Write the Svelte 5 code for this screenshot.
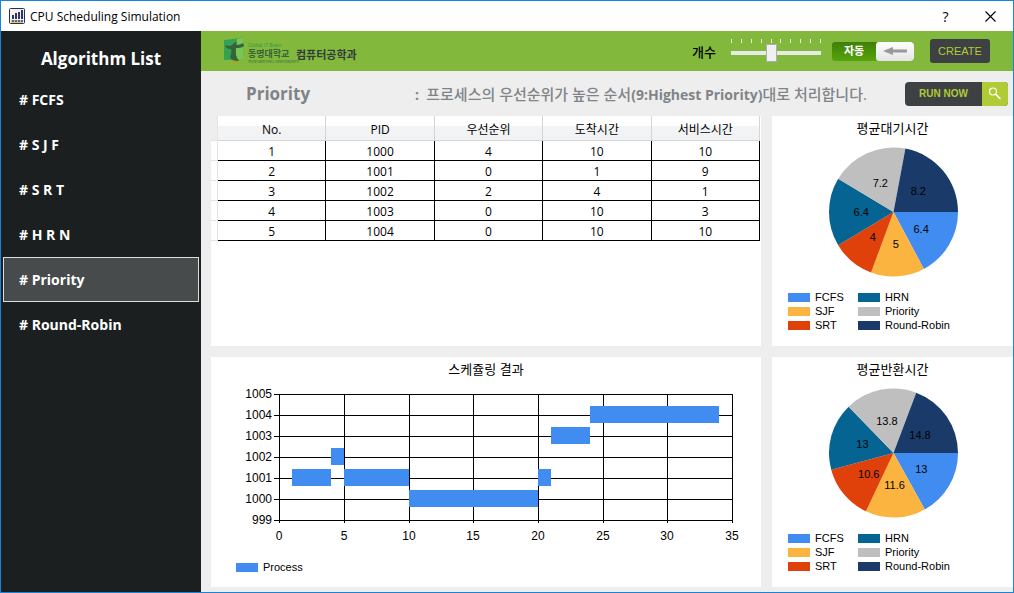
<script>
  const algorithms = ['FCFS', 'S J F', 'S R T', 'H R N', 'Priority', 'Round-Robin'];
  let selected = $state('Priority');
  let count = $state(5);
  let automatic = $state(true);

  const columns = ['No.', 'PID', '우선순위', '도착시간', '서비스시간'];
  const rows = [
    [1, 1000, 4, 10, 10],
    [2, 1001, 0, 1, 9],
    [3, 1002, 2, 4, 1],
    [4, 1003, 0, 10, 3],
    [5, 1004, 0, 10, 10]
  ];

  const names = ['FCFS', 'SJF', 'SRT', 'HRN', 'Priority', 'Round-Robin'];
  const colors = ['#418cf0', '#fcb441', '#e0400a', '#056492', '#bfbfbf', '#1a3b69'];
  const pies = [
    { title: '평균대기시간', values: [6.4, 5, 4, 6.4, 7.2, 8.2] },
    { title: '평균반환시간', values: [13, 11.6, 10.6, 13, 13.8, 14.8] }
  ];

  const R = 64.5;
  function slices(values) {
    const total = values.reduce((a, b) => a + b, 0);
    let angle = 0;
    return values.map((value, i) => {
      const start = angle;
      const end = (angle += (value / total) * Math.PI * 2);
      const mid = (start + end) / 2;
      const at = (a, r) => `${(r * Math.cos(a)).toFixed(2)} ${(r * Math.sin(a)).toFixed(2)}`;
      return {
        value,
        color: colors[i],
        d: `M0 0L${at(start, R)}A${R} ${R} 0 0 1 ${at(end, R)}Z`,
        x: (Math.cos(mid) * R) / 2,
        y: (Math.sin(mid) * R) / 2
      };
    });
  }

  const runs = [
    [1001, 1, 4],
    [1002, 4, 5],
    [1001, 5, 10],
    [1000, 10, 20],
    [1001, 20, 21],
    [1003, 21, 24],
    [1004, 24, 34]
  ];
  const px = (t) => Math.round(68.1 + (t * 453) / 35);
  const py = (pid) => 11 + (1005 - pid) * 21;
  const times = [0, 5, 10, 15, 20, 25, 30, 35];
  const pids = [1005, 1004, 1003, 1002, 1001, 1000, 999];
</script>

<div class="window">
  <header class="titlebar">
    <svg class="app-icon" viewBox="0 0 16 16" aria-hidden="true">
      <rect x=".5" y=".5" width="15" height="15" rx="1" fill="#f4f1e6" stroke="#2c2a66" />
      <path d="M3 7h2v4H3zM6 5h2v6H6zM9 4h2v7H9zM12 2h2v9h-2z" fill="#35306e" />
      <path d="M2 12h12v3H2z" fill="#f7c62f" />
      <path d="M3 12h2v2H3zM6 12h2v2H6zM9 12h2v2H9zM12 12h2v2h-2z" fill="#2d72b8" />
    </svg>
    <span class="caption">CPU Scheduling Simulation</span>
    <button class="win-btn" aria-label="Help">?</button>
    <button class="win-btn" aria-label="Close">
      <svg width="11" height="11" viewBox="0 0 11 11"><path d="M.5.5l10 10M10.5.5l-10 10" stroke="#000" stroke-width="1.1" /></svg>
    </button>
  </header>

  <div class="body">
    <nav class="sidebar">
      <h1>Algorithm List</h1>
      {#each algorithms as name}
        <button class:active={selected === name} onclick={() => (selected = name)}># {name}</button>
      {/each}
    </nav>

    <main>
      <div class="toolbar">
        <div class="logo">
          <svg width="22" height="26" viewBox="0 0 22 26" aria-hidden="true">
            <path d="M1 2L20 0l1 21-20 1z" fill="#35a152" />
            <path d="M14 1l6-1 1 21-9 1z" fill="#7cc455" />
            <path d="M2 7c4 2 7 1 9-2l3-1-1 3c3 0 5-1 7-2l1 3c-3 2-5 2-8 2-1 5 0 9 3 13-4 1-8-1-9-4 1-3 2-5 1-8-3 0-5-1-6-4z" fill="#34623b" />
            <path d="M7 22c4 1 7 0 10 2-3 2-7 2-10-2z" fill="#a4a92d" />
          </svg>
          <span class="university">
            <small class="slogan">Global IT Brain</small>
            <b>동명대학교</b>
            <small>TONGMYONG UNIVERSITY</small>
          </span>
          <strong>컴퓨터공학과</strong>
        </div>
        <label for="count">개수</label>
        <div class="slider">
          <div class="ticks">{#each Array(10) as _}<i></i>{/each}</div>
          <input id="count" type="range" min="1" max="10" bind:value={count} />
        </div>
        <button class="toggle" aria-pressed={automatic} onclick={() => (automatic = !automatic)}>
          <span class="on">자동</span>
          <span class="knob">
            <svg width="24" height="10" viewBox="0 0 24 10"><path d="M0 5l10-4v2.500h14v3H10V9z" fill="#999" /></svg>
          </span>
        </button>
        <button class="create">CREATE</button>
      </div>

      <div class="heading">
        <h2>{selected}</h2>
        <p>:&nbsp; <span>프로세스의 우선순위가 높은 순서</span>(9:Highest Priority)<span>대로 처리합니다.</span></p>
        <button class="run">
          <span class="run-text">RUN NOW</span>
          <span class="run-icon">
            <svg width="14" height="14" viewBox="0 0 14 14" fill="none" stroke="#fff"><circle cx="5" cy="4.500" r="3.500" stroke-width="1.2" /><path d="M7.500 7l5 5" stroke-width="1.500" /></svg>
          </span>
        </button>
      </div>

      <div class="panels">
        <section class="panel">
          <table>
            <thead>
              <tr><td class="stub"></td>{#each columns as c}<th scope="col">{c}</th>{/each}</tr>
            </thead>
            <tbody>
              {#each rows as row}
                <tr><td class="stub"></td>{#each row as cell}<td>{cell}</td>{/each}</tr>
              {/each}
            </tbody>
          </table>
        </section>

        {@render pie(pies[0])}

        <section class="panel">
          <h3>스케쥴링 결과</h3>
          <svg class="gantt" viewBox="0 0 550 172" role="img" aria-label="스케쥴링 결과">
            <g fill="#000" shape-rendering="crispEdges">
              {#each pids as pid}<rect x="63" y={py(pid)} width="459" height="1" />{/each}
              {#each times as t}<rect x={px(t)} y="11" width="1" height="129" />{/each}
            </g>
            {#each runs as [pid, from, to]}
              <rect x={px(from)} y={py(pid) - 9} width={px(to) - px(from)} height="17" fill="#418cf0" />
            {/each}
            {#each pids as pid}<text x="61" y={py(pid) + 4} text-anchor="end">{pid}</text>{/each}
            {#each times as t}<text x={px(t)} y="157" text-anchor="middle">{t}</text>{/each}
          </svg>
          <ul class="legend single">
            <li><i style:background={colors[0]}></i>Process</li>
          </ul>
        </section>

        {@render pie(pies[1])}
      </div>
    </main>
  </div>
</div>

{#snippet pie(chart)}
  <section class="panel">
    <h3>{chart.title}</h3>
    <svg class="pie" viewBox="0 0 241 144" role="img" aria-label={chart.title}>
      <g transform="translate(121.5 70)">
        {#each slices(chart.values) as s}<path d={s.d} fill={s.color} />{/each}
        {#each slices(chart.values) as s}<text x={s.x} y={s.y + 4} text-anchor="middle">{s.value}</text>{/each}
      </g>
    </svg>
    <ul class="legend">
      {#each names as name, i}
        <li><i style:background={colors[i]}></i>{name}</li>
      {/each}
    </ul>
  </section>
{/snippet}

<style>
  :global(body) {
    margin: 0;
  }
  .window {
    box-sizing: border-box;
    min-height: 100vh;
    display: flex;
    flex-direction: column;
    border: 1px solid #1883d7;
    background: #eee;
    font-family: 'Open Sans', 'Noto Sans CJK KR', sans-serif;
    font-size: 12px;
    color: #000;
  }
  button {
    border: 0;
    padding: 0;
    font: inherit;
    cursor: pointer;
  }
  h1, h2, h3, p, ul {
    margin: 0;
    padding: 0;
  }
  .titlebar {
    display: flex;
    align-items: center;
    height: 30px;
    padding-left: 8px;
    background: #fff;
  }
  .app-icon {
    width: 16px;
    height: 16px;
    margin-right: 5px;
  }
  .caption {
    flex: 1;
  }
  .win-btn {
    width: 45px;
    height: 30px;
    background: none;
    font-size: 14px;
  }
  .body {
    flex: 1;
    display: flex;
  }
  .sidebar {
    flex: 0 0 200px;
    box-sizing: border-box;
    display: flex;
    flex-direction: column;
    padding: 0 2px;
    background: #1c1f20;
    color: #fff;
  }
  .sidebar h1 {
    height: 46px;
    line-height: 56px;
    text-align: center;
    font-size: 17px;
  }
  .sidebar button {
    height: 45px;
    border: 1px solid transparent;
    padding-left: 15px;
    background: none;
    color: #fff;
    font-size: 14px;
    font-weight: 700;
    text-align: left;
  }
  .sidebar button.active {
    border-color: #ddd;
    background: #484b4b;
  }
  main {
    flex: 1;
    min-width: 0;
    display: flex;
    flex-direction: column;
  }
  .toolbar {
    display: flex;
    align-items: center;
    height: 40px;
    padding: 0 23px 0 22px;
    background: #82b93c;
  }
  .logo {
    display: flex;
    align-items: center;
    flex: 1;
    gap: 3px;
    color: #333a3c;
    white-space: nowrap;
  }
  .logo strong {
    padding-top: 6px;
    font-size: 11px;
  }
  .university {
    display: flex;
    flex-direction: column;
    width: 45px;
    padding-top: 4px;
    color: #34623b;
  }
  .university b {
    font-size: 9px;
    line-height: 11px;
  }
  .university small {
    font-family: 'Liberation Serif', serif;
    font-size: 4px;
    line-height: 5px;
  }
  .university .slogan {
    color: #35974a;
    font-family: 'Liberation Sans', sans-serif;
    font-size: 5px;
    line-height: 5px;
  }
  .toolbar label {
    margin-right: 15px;
    font-size: 13px;
    font-weight: 500;
  }
  .slider {
    width: 90px;
    margin-right: 11px;
  }
  .ticks {
    display: flex;
    justify-content: space-between;
  }
  .ticks i {
    width: 1px;
    height: 4px;
    background: #eee;
  }
  .slider input {
    display: block;
    width: 100%;
    height: 20px;
    margin: 0;
    appearance: none;
    background: none;
  }
  .slider input::-webkit-slider-runnable-track {
    height: 4px;
    background: #e8eae6;
  }
  .slider input::-webkit-slider-thumb {
    appearance: none;
    box-sizing: border-box;
    width: 11px;
    height: 18px;
    margin-top: -7px;
    border: 1px solid #adadad;
    background: #f0f0f0;
  }
  .toggle {
    display: flex;
    width: 82px;
    height: 19px;
    margin-right: 16px;
    border-radius: 3px;
    background: linear-gradient(#3f7f08, #56a40d);
    color: #fff;
    font-size: 11px;
    font-weight: 700;
    overflow: hidden;
  }
  .toggle .on {
    flex: 1;
    line-height: 18px;
  }
  .toggle .knob {
    display: flex;
    align-items: center;
    justify-content: center;
    width: 38px;
    border-radius: 3px;
    background: linear-gradient(#fff, #e4e4e4);
  }
  .create {
    width: 60px;
    height: 24px;
    border-radius: 3px;
    background: #3d4144;
    color: #b0cb35;
    font-family: 'Liberation Sans', sans-serif;
    font-size: 11px;
  }
  .heading {
    display: flex;
    align-items: center;
    height: 45px;
    padding: 0 5px 0 45px;
    color: #808488;
  }
  .heading h2 {
    width: 169px;
    font-size: 17px;
  }
  .heading p {
    flex: 1;
    font-size: 14px;
    font-weight: 700;
    white-space: nowrap;
  }
  .heading p span {
    font-size: 15px;
    font-weight: 500;
  }
  .run {
    display: flex;
    height: 24px;
    border-radius: 4px;
    overflow: hidden;
    background: #3d4144;
    color: #b0cb35;
    font-family: 'Liberation Sans', sans-serif;
    font-size: 10px;
    font-weight: 700;
  }
  .run-text {
    width: 77px;
    line-height: 24px;
    text-align: center;
  }
  .run-icon {
    display: flex;
    align-items: center;
    justify-content: center;
    width: 26px;
    height: 24px;
    background: #b0cb35;
  }
  .panels {
    flex: 1;
    display: grid;
    grid-template-columns: minmax(0, 550fr) minmax(0, 241fr);
    grid-template-rows: 1fr 1fr;
    gap: 11px;
    padding: 0 0 5px 10px;
  }
  .panel {
    background: #fff;
    font-family: 'Liberation Sans', 'Noto Sans CJK KR', sans-serif;
    font-size: 11px;
  }
  h3 {
    height: 26px;
    line-height: 26px;
    text-align: center;
    font-size: 13px;
    font-weight: 400;
  }
  table {
    width: calc(100% - 1px);
    table-layout: fixed;
    border-spacing: 0;
    font-family: 'Open Sans', 'Noto Sans CJK KR', sans-serif;
    font-size: 12px;
    text-align: center;
  }
  th, td {
    box-sizing: border-box;
    height: 20px;
    padding: 2px 0 0;
    border: solid #000;
    border-width: 0 1px 1px 0;
    line-height: 17px;
  }
  th {
    height: 25px;
    padding-top: 3px;
    border-color: #d5d5d5;
    background: linear-gradient(#fff 40%, #f3f4f6 41%, #f1f2f4);
    font-weight: 400;
  }
  td.stub {
    width: 7px;
    border-color: #e4e4e4;
  }
  thead td.stub {
    background: #eee;
  }
  .gantt, .pie {
    display: block;
    width: 100%;
  }
  .gantt {
    font-size: 12px;
  }
  .legend {
    display: grid;
    grid-template-columns: 70px auto;
    grid-template-rows: repeat(3, 14px);
    grid-auto-flow: column;
    padding: 4px 0 0 16px;
    list-style: none;
    line-height: 14px;
  }
  .legend li {
    display: flex;
    align-items: center;
    gap: 5px;
    white-space: nowrap;
  }
  .legend i {
    width: 22px;
    height: 9px;
  }
  .legend.single {
    display: flex;
    padding: 5px 0 0 25px;
  }
</style>
